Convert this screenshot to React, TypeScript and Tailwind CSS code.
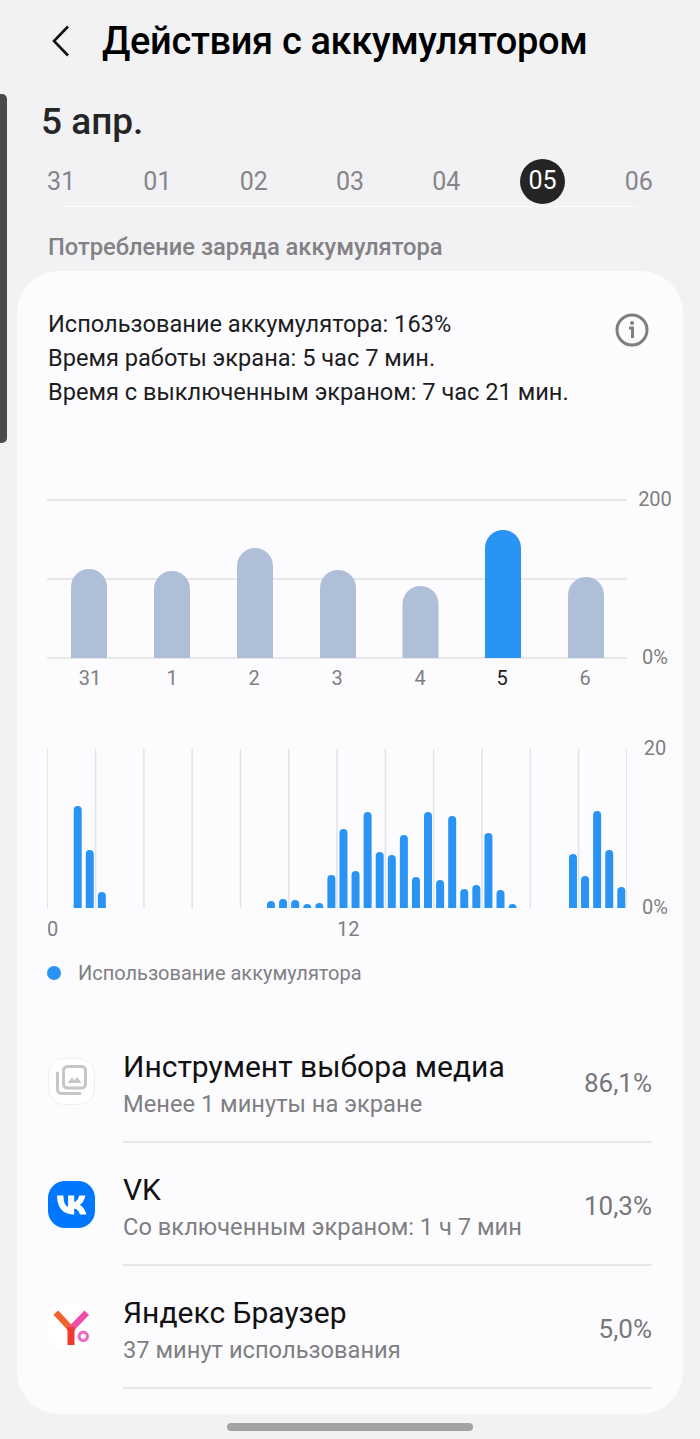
import React from 'react';

const days = ['31', '01', '02', '03', '04', '05', '06'];

// day bars: left, top and label centre in page px, base line is 658
const dayBars = [
  { label: '31', x: 71, top: 569, c: 90 },
  { label: '1', x: 154, top: 571, c: 172 },
  { label: '2', x: 237, top: 548, c: 254 },
  { label: '3', x: 320, top: 570, c: 337 },
  { label: '4', x: 402.5, top: 586, c: 420 },
  { label: '5', x: 485, top: 530, c: 502, active: true },
  { label: '6', x: 568, top: 577, c: 585 },
];

// half-hour bars: [slot, top]
const hourBars: [number, number][] = [
  [0, 805], [1, 849], [2, 891],
  [16, 900], [17, 898], [18, 899], [19, 903], [20, 902], [21, 874], [22, 828], [23, 870],
  [24, 811], [25, 851], [26, 854], [27, 834], [28, 876], [29, 811], [30, 879], [31, 815],
  [32, 888], [33, 884], [34, 832], [35, 889], [36, 903],
  [41, 853], [42, 875], [43, 810], [44, 849], [45, 886],
];

const apps = [
  { name: 'Инструмент выбора медиа', sub: 'Менее 1 минуты на экране', pct: '86,1%', icon: <MediaIcon /> },
  { name: 'VK', sub: 'Со включенным экраном: 1 ч 7 мин', pct: '10,3%', icon: <VkIcon /> },
  { name: 'Яндекс Браузер', sub: '37 минут использования', pct: '5,0%', icon: <YandexIcon /> },
];

function topRounded(x: number, w: number, top: number, base: number, r: number) {
  return `M${x} ${base}V${top + r}A${r} ${r} 0 0 1 ${x + w} ${top + r}V${base}Z`;
}

function MediaIcon() {
  return (
    <div className="w-[47px] h-[47px] rounded-[16px] bg-white border border-[#efeff1]">
      <svg width="45" height="45" viewBox="1 1 45 45" fill="none">
        <path d="M9.5 15v16.5a4 4 0 0 0 4 4H32" stroke="#c6c6c8" strokeWidth="3" strokeLinecap="round" />
        <rect x="15.5" y="8.5" width="22" height="21.5" rx="4" stroke="#c6c6c8" strokeWidth="3" />
        <path d="M19.5 25l4.5-5.5 2.5 2.8 2.5-3.3 4.5 6z" fill="#c6c6c8" />
      </svg>
    </div>
  );
}

function VkIcon() {
  return (
    <div className="w-[47px] h-[47px] rounded-[17px] bg-[#0077ff] flex items-center justify-center">
      <svg width="41" height="41" viewBox="0 0 48 48" fill="#ffffff" stroke="#ffffff" strokeWidth="2">
        <path d="M25.54 34.58c-10.94 0-17.18-7.5-17.44-19.98h5.48c.18 9.16 4.22 13.04 7.42 13.84V14.6h5.16v7.9c3.16-.34 6.48-3.94 7.6-7.9h5.16c-.86 4.88-4.46 8.48-7.02 9.96 2.56 1.2 6.66 4.34 8.22 10.02h-5.68c-1.22-3.8-4.26-6.74-8.28-7.14v7.14h-.62Z" />
      </svg>
    </div>
  );
}

function YandexIcon() {
  return (
    <div className="w-[47px] h-[47px] rounded-[16px] bg-white">
      <svg width="47" height="47" viewBox="0 0 47 47" fill="none">
        <path d="M10 11l13 14" stroke="#f2622e" strokeWidth="6.5" strokeLinecap="square" />
        <path d="M36.5 11l-13.5 14" stroke="#f04fa8" strokeWidth="6.5" strokeLinecap="square" />
        <path d="M23 23v18" stroke="#f03a2e" strokeWidth="7" />
        <circle cx="35.3" cy="32.3" r="4.2" stroke="#ee6cc0" strokeWidth="3.2" />
      </svg>
    </div>
  );
}

export default function App() {
  return (
    <div className="relative w-[700px] h-[1439px] overflow-hidden bg-[#f2f2f4] font-['Roboto',sans-serif]">
      {/* Side handle */}
      <div className="absolute left-0 top-[94px] w-[7px] h-[349px] rounded-r-[5px] bg-[#4a4a4a]" />

      {/* Header */}
      <div className="flex items-center h-[82px] pl-[52px]">
        <svg width="18" height="32" viewBox="0 0 18 32" fill="none">
          <path d="M16 1.5 2 16l14 14.5" stroke="#111111" strokeWidth="2.6" />
        </svg>
        <h1 className="ml-[32px] text-[38px] leading-[46px] font-medium tracking-[-0.35px] text-black">
          Действия с аккумулятором
        </h1>
      </div>

      <div className="pl-[41px] h-[60px] pt-[17px] text-[37px] leading-[46px] font-medium text-[#252525]">5 апр.</div>

      {/* Date strip */}
      <div className="grid grid-cols-7 mx-[13px] h-[46px] mt-[16px] items-center justify-items-center">
        {days.map((d) =>
          d === '05' ? (
            <div key={d} className="w-[45px] h-[45px] rounded-full bg-[#252527] text-white text-[25px] flex items-center justify-center">
              {d}
            </div>
          ) : (
            <div key={d} className="text-[25px] pt-[2px] text-[#86868a]">{d}</div>
          ),
        )}
      </div>
      <div className="mx-[60px] mr-[62px] mt-[2px] h-px bg-[#fbfbfc]" />

      <div className="pl-[48px] mt-[25px] h-[30px] text-[23.7px] leading-[30px] font-medium text-[#828285]">
        Потребление заряда аккумулятора
      </div>

      {/* Card */}
      <div className="mx-[17px] mt-[9px] h-[1143px] rounded-[42px] bg-[#fcfcfe] overflow-hidden">
        <div className="flex justify-between pl-[31px] pr-[34px] pt-[36px] h-[206px]">
          <div className="text-[23.6px] leading-[34px] text-[#1d1d1f]">
            <div>Использование аккумулятора: 163%</div>
            <div>Время работы экрана: 5 час 7 мин.</div>
            <div>Время с выключенным экраном: 7 час 21 мин.</div>
          </div>
          <svg width="34" height="34" viewBox="0 0 34 34" fill="none" className="mt-[6px] shrink-0">
            <circle cx="17" cy="17" r="15" stroke="#7f7f7f" strokeWidth="3" />
            <circle cx="17" cy="10" r="2" fill="#7f7f7f" />
            <path d="M14 15h3.5v10" stroke="#7f7f7f" strokeWidth="3" />
          </svg>
        </div>

        {/* Daily chart */}
        <div className="flex pl-[30px] mt-[22px]">
          <svg width="580" height="160" viewBox="47 499 580 160" className="shrink-0">
            {[500, 579, 658].map((y) => (
              <rect key={y} x="47" y={y - 1} width="580" height="2" fill="#e7e7ea" />
            ))}
            {dayBars.map((b) => (
              <path key={b.label} d={topRounded(b.x, 36, b.top, 658, 18)} fill={b.active ? '#2994f4' : '#b0bfd8'} />
            ))}
          </svg>
          <div className="flex flex-col items-center justify-between w-[58px] h-[180px] -mt-[11px] text-[20px] leading-[22px] text-[#7f7f82]">
            <span>200</span>
            <span>0%</span>
          </div>
        </div>
        <div className="relative h-[22px] -mt-[1px] text-[20px] leading-[22px] text-[#7f7f82]">
          {dayBars.map((b) => (
            <span
              key={b.label}
              className={`absolute -translate-x-1/2 ${b.active ? 'text-[#1d1d1f]' : ''}`}
              style={{ left: b.c - 17 }}
            >
              {b.label}
            </span>
          ))}
        </div>

        {/* Hourly chart */}
        <div className="flex pl-[30px] mt-[60px]">
          <svg width="580" height="159" viewBox="47 748 580 159" className="shrink-0">
            {Array.from({ length: 13 }).map((_, i) => (
              <rect key={i} x={46.5 + i * 48.3} y="748" width="1.6" height="159" fill="#e4e4e8" />
            ))}
            {hourBars.map(([slot, top]) => (
              <path key={slot} d={topRounded(73.7 + slot * 12.08, 8, top, 907, 4)} fill="#2994f4" />
            ))}
          </svg>
          <div className="flex flex-col items-center justify-between w-[59px] h-[181px] -mt-[12px] text-[20px] leading-[22px] text-[#7f7f82]">
            <span>20</span>
            <span>0%</span>
          </div>
        </div>
        <div className="flex h-[22px] pl-[30px] text-[20px] leading-[22px] text-[#7f7f82]">
          <span className="w-[290px]">0</span>
          <span>12</span>
        </div>

        {/* Legend */}
        <div className="flex items-center pl-[30px] mt-[21px] h-[24px]">
          <div className="w-[14px] h-[14px] rounded-full bg-[#2994f4]" />
          <span className="ml-[17px] text-[20px] text-[#808083]">Использование аккумулятора</span>
        </div>

        {/* App list */}
        <div className="mt-[35px]">
          {apps.map((a) => (
            <div key={a.name} className="flex items-center h-[123px] pl-[31px]">
              <div className="shrink-0 -mt-[1px]">{a.icon}</div>
              <div className="flex items-center justify-between ml-[28px] mr-[31px] flex-1 h-full border-b-2 border-[#e7e7ea] pt-[5px]">
                <div>
                  <div className="text-[30px] leading-[38px] text-[#111113]">{a.name}</div>
                  <div className="text-[23.7px] leading-[30px] mt-[3px] text-[#7f7f82]">{a.sub}</div>
                </div>
                <div className="text-[26px] text-[#77777a]">{a.pct}</div>
              </div>
            </div>
          ))}
        </div>
      </div>

      {/* Nav pill */}
      <div className="absolute left-[227px] top-[1423px] w-[246px] h-[8px] rounded-full bg-[#a3a3a5]" />
    </div>
  );
}
